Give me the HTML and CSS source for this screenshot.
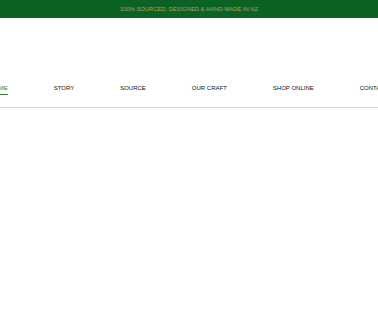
FILE: index.html
```html
<!DOCTYPE html>
<html lang="en">
<head>
  <meta charset="UTF-8">
  <meta name="viewport" content="width=device-width, initial-scale=1.0">
  <title>Home</title>
  <link rel="stylesheet" href="styles.css">
</head>
<body>
  <div class="topbar">100% SOURCED, DESIGNED &amp; HAND-MADE IN NZ</div>

  <header class="header">
    <nav class="nav">
      <a href="#" class="nav-link active">HOME</a>
      <a href="#" class="nav-link">STORY</a>
      <a href="#" class="nav-link">SOURCE</a>
      <a href="#" class="nav-link">OUR CRAFT</a>
      <a href="#" class="nav-link">SHOP ONLINE</a>
      <a href="#" class="nav-link">CONTACT</a>
    </nav>
  </header>
</body>
</html>
```

FILE: styles.css
```css
body {
  font-family: "Liberation Sans", Arial, sans-serif;
  margin: 0;
  overflow: hidden;
}
.topbar {
  background-color: #0b6224;
  color: #a9a563;
  font-size: 5.8px;
  height: 18px;
  line-height: 18px;
  text-align: center;
}
.header {
  height: 90px;
  box-sizing: border-box;
  border-bottom: 1px solid #cbd8cc;
  display: flex;
  align-items: flex-end;
}
.nav {
  width: 100%;
  display: flex;
  justify-content: center;
  gap: 46px;
  padding-bottom: 12px;
}
.nav-link {
  flex-shrink: 0;
  color: #111;
  font-size: 6px;
  text-decoration: none;
  white-space: nowrap;
  padding-bottom: 3px;
  border-bottom: 1px solid transparent;
}
.nav-link.active {
  color: #2f7d3d;
  border-bottom-color: #2f7d3d;
}
```
